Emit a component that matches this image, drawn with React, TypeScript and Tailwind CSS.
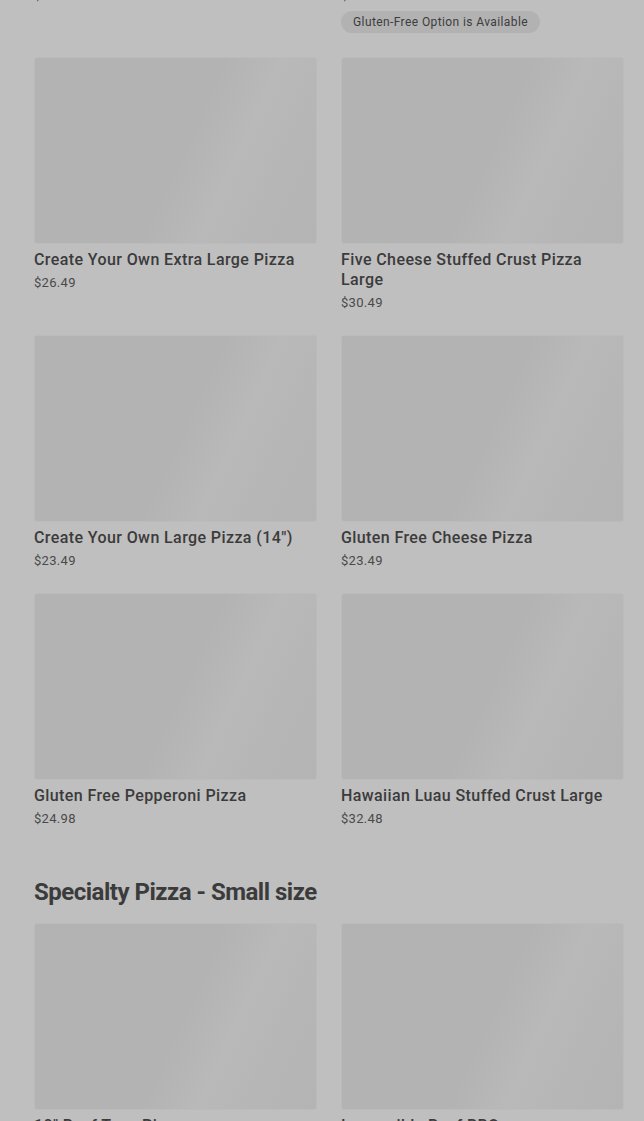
import React from 'react';

type Item = { name: string; price: string; badge?: string };

const topRow: Item[] = [
  { name: 'Pepperoni Pizza', price: '$20.49' },
  { name: 'Cheese Pizza', price: '$20.49', badge: 'Gluten-Free Option is Available' },
];

const largeItems: Item[] = [
  { name: 'Create Your Own Extra Large Pizza', price: '$26.49' },
  { name: 'Five Cheese Stuffed Crust Pizza Large', price: '$30.49' },
  { name: 'Create Your Own Large Pizza (14")', price: '$23.49' },
  { name: 'Gluten Free Cheese Pizza', price: '$23.49' },
  { name: 'Gluten Free Pepperoni Pizza', price: '$24.98' },
  { name: 'Hawaiian Luau Stuffed Crust Large', price: '$32.48' },
];

const smallItems: Item[] = [
  { name: '10" Beef Taco Pizza', price: '$14.49' },
  { name: 'Impossible Beef BBQ', price: '$15.49' },
];

const ItemCard: React.FC<{ item: Item }> = ({ item }) => (
  <div className="flex flex-col">
    {/* placeholder image, still loading */}
    <div className="h-[187px] rounded-[3px] border border-[#bbbbbb] bg-[linear-gradient(115deg,#b3b3b3_0%,#b3b3b3_52%,#b9b9b9_68%,#b6b6b6_82%,#b4b4b4_100%)]" />
    <div className="mt-[6px] text-[16px] leading-5 font-medium tracking-[0.4px] text-[#3b3b3b]">{item.name}</div>
    <div className="mt-[3px] text-[13px] leading-5 tracking-[0.3px] text-[#4a4a4a]">{item.price}</div>
    {item.badge && (
      <div className="mt-[5px] mb-[2px] self-start rounded-full bg-[#b2b2b2] px-3 text-[12px] leading-[22px] tracking-[0.4px] text-[#3d3d3d]">
        {item.badge}
      </div>
    )}
  </div>
);

const App: React.FC = () => {
  return (
    <div className="min-h-[1121px] overflow-hidden bg-[#bfbfbf] font-['Roboto',sans-serif]">
      <div className="-mt-[230px] pl-[34px] pr-[20px]">
        <div className="grid grid-cols-2 gap-x-6 gap-y-[22px]">
          {topRow.map((item) => (
            <ItemCard key={item.name} item={item} />
          ))}
          {largeItems.map((item) => (
            <ItemCard key={item.name} item={item} />
          ))}
        </div>

        <h2 className="mt-[47px] mb-[15px] text-[24px] leading-8 font-bold tracking-[-0.5px] text-[#3b3b3b]">
          Specialty Pizza - Small size
        </h2>
        <div className="grid grid-cols-2 gap-x-6 gap-y-[22px]">
          {smallItems.map((item) => (
            <ItemCard key={item.name} item={item} />
          ))}
        </div>
      </div>
    </div>
  );
};

export default App;
